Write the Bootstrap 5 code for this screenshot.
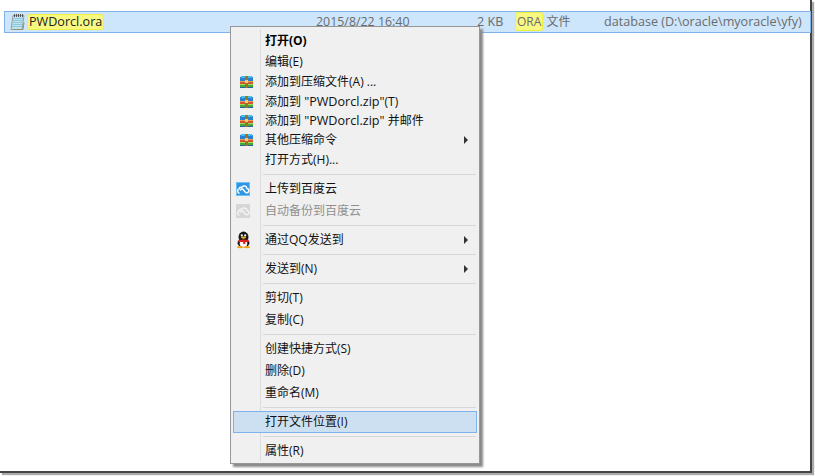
<!doctype html>
<html lang="zh">
<head>
<meta charset="utf-8">
<title>PWDorcl.ora</title>
<link href="https://cdn.jsdelivr.net/npm/bootstrap@5.3.0/dist/css/bootstrap.min.css" rel="stylesheet">
<style>
html,body{height:100%;overflow:hidden;background:#fff}
body{font-family:"Open Sans","Noto Sans CJK SC",sans-serif;font-size:12px;line-height:16px;color:#111}
.shot{position:relative;width:812px;height:473px;background:#fff;border-right:2px solid #444;border-bottom:2px solid #444;box-shadow:2px 2px 1px #aaa;padding:11px 0 0 4px}
.filerow{width:807px;height:22px;background:#cde6fc;border:1px solid #7fb2e8;color:#6b6b6b;align-items:center}
.fname{width:311px;display:flex;align-items:center;padding-left:3px;color:#222;font-size:12.6px}
.hl{background:#f8f983;border:1px solid #eef03c;border-radius:3px;padding:0 1px;line-height:14px;margin-left:1px}
.fdate{width:161px;font-size:12.4px}.fsize{width:38px;font-size:12.6px}.ftype{width:89px;white-space:nowrap}.hl2{margin-left:0;color:#6b6b6b}
.floc{font-size:12.6px}
.menubox{position:absolute;left:230px;top:26px;width:250px;height:438px;background:#f0f0f0;border:1px solid #979797;box-shadow:3px 3px 2px #8a8a8a;padding:3px 2px 2px}
.gutter{position:absolute;left:29px;top:2px;bottom:2px;width:1px;background:#dcdcdc}
.mi{position:relative;height:22px;display:flex;align-items:center;padding-left:31px;border:1px solid transparent;white-space:pre}
.h21{height:21px}.h20{height:20px}.h19{height:19px}
.lat{font-size:12.6px}
.mi.dis{color:#8f8f8f}.mi.strong{font-weight:700;color:#000}
.mi.act{background:#cde0f2;border-color:#7eb2e8}
.sep{height:1px;background:#d7d7d7;margin:3px 1px 3px 30px}
.mic{position:absolute;left:1px;top:50%;transform:translateY(-50%);width:18px;height:18px;display:block}
.arrow{position:absolute;right:8px;top:50%;margin-top:-4px;border-left:4px solid #333;border-top:4px solid transparent;border-bottom:4px solid transparent}
</style>
</head>
<body>
<svg width="0" height="0" class="d-block" aria-hidden="true"><defs>
<g id="rar">
<rect x="5" y="4" width="13" height="4" fill="#2a7fd0"/><rect x="6" y="3" width="11" height="2" fill="#3fc0ea"/>
<rect x="5" y="8" width="13" height="3" fill="#d2552f"/><rect x="5" y="8" width="13" height="1" fill="#ee9a5a"/>
<rect x="5" y="11" width="13" height="3" fill="#4aa83a"/><rect x="5" y="11" width="13" height="1" fill="#a0dc5a"/>
<rect x="5" y="14" width="13" height="1" fill="#2a5fa0"/>
<rect x="10" y="3" width="3" height="12" fill="#9a7420"/><rect x="10" y="7" width="3" height="3" fill="#f2d070"/>
</g>
<path id="cld" d="M4.6 12.2a2.2 2.2 0 0 1 -.4-4.3 1.9 1.9 0 0 1 2.5-1.6 2.9 2.9 0 0 1 5.3 1.2 2 2 0 0 1 1.3 3.4 2.2 2.2 0 0 1 -3.6-.4l-1.6-2.2a1.5 1.5 0 0 0 -2.5 1.3"/>
</defs></svg>
<div class="shot">
<div class="filerow d-flex">
<div class="fname"><svg width="18" height="18" viewBox="0 0 18 18"><path d="M5 2.5h11l-2 14H3z" fill="#bfe2ec" stroke="#8fa0a6"/><path d="M5 16.5h10l1-7" fill="none" stroke="#a08a60"/><path d="M5 5.5h10M5 7.5h10M4.6 9.5h10M4.4 11.5h10M4 13.5h10" stroke="#8cc8dc"/><path d="M6.5 1v3M8.5 1v3M10.5 1v3M12.5 1v3M14.5 1v3" stroke="#555"/></svg><span class="hl">PWDorcl.ora</span></div>
<div class="fdate">2015/8/22 16:40</div>
<div class="fsize">2 KB</div>
<div class="ftype"><span class="hl hl2">ORA</span> 文件</div>
<div class="floc text-nowrap">database (D:\oracle\myoracle\yfy)</div>
</div>
<div class="menubox">
<div class="gutter"></div>
<div class="mi h21 strong">打开(O)</div>
<div class="mi h21">编辑(E)</div>
<div class="mi h20"><svg class="mic" viewBox="0 0 18 18"><use href="#rar"/></svg>添加到压缩文件(A) ...</div>
<div class="mi h19"><svg class="mic" viewBox="0 0 18 18"><use href="#rar"/></svg>添加到 <span class="lat">"PWDorcl.zip"</span>(T)</div>
<div class="mi h19"><svg class="mic" viewBox="0 0 18 18"><use href="#rar"/></svg>添加到 <span class="lat">"PWDorcl.zip"</span> 并邮件</div>
<div class="mi h19"><svg class="mic" viewBox="0 0 18 18"><use href="#rar"/></svg>其他压缩命令<span class="arrow"></span></div>
<div class="mi">打开方式(H)...</div>
<div class="sep"></div>
<div class="mi"><svg class="mic" viewBox="0 0 18 18"><rect x="1" y="2" width="14" height="14" fill="#2f96e6"/><rect x="1.5" y="2.5" width="13" height="13" fill="none" stroke="#6cc0f4"/><use href="#cld" fill="none" stroke="#fff" stroke-width="1.5" y="1"/></svg>上传到百度云</div>
<div class="mi dis"><svg class="mic" viewBox="0 0 18 18"><rect x="1" y="2" width="14" height="14" fill="#d6d6d6"/><use href="#cld" fill="none" stroke="#f4f4f4" stroke-width="1.5" y="1"/></svg>自动备份到百度云</div>
<div class="sep"></div>
<div class="mi"><svg class="mic" viewBox="0 0 18 18"><ellipse cx="8.5" cy="6" rx="5" ry="5.4" fill="#161616"/><ellipse cx="8.5" cy="12" rx="6" ry="4.2" fill="#161616"/><ellipse cx="8.5" cy="12.4" rx="3.8" ry="3.6" fill="#f6f6f6"/><circle cx="6.8" cy="4.4" r="1.1" fill="#fff"/><circle cx="10.2" cy="4.4" r="1.1" fill="#fff"/><ellipse cx="8.5" cy="6.6" rx="2.6" ry="1.1" fill="#f2b420"/><path d="M3.4 8.8h10.2v2.1h-3.3v2.2H8.2v-2.2H3.4z" fill="#dc2020"/><ellipse cx="5" cy="16.2" rx="3" ry="1.1" fill="#f2a210"/><ellipse cx="12" cy="16.2" rx="3" ry="1.1" fill="#f2a210"/></svg>通过QQ发送到<span class="arrow"></span></div>
<div class="sep"></div>
<div class="mi">发送到(N)<span class="arrow"></span></div>
<div class="sep"></div>
<div class="mi">剪切(T)</div>
<div class="mi">复制(C)</div>
<div class="sep"></div>
<div class="mi">创建快捷方式(S)</div>
<div class="mi">删除(D)</div>
<div class="mi">重命名(M)</div>
<div class="sep"></div>
<div class="mi act">打开文件位置(I)</div>
<div class="sep"></div>
<div class="mi">属性(R)</div>
</div>
</div>
<script src="https://cdn.jsdelivr.net/npm/bootstrap@5.3.0/dist/js/bootstrap.bundle.min.js"></script>
</body>
</html>
